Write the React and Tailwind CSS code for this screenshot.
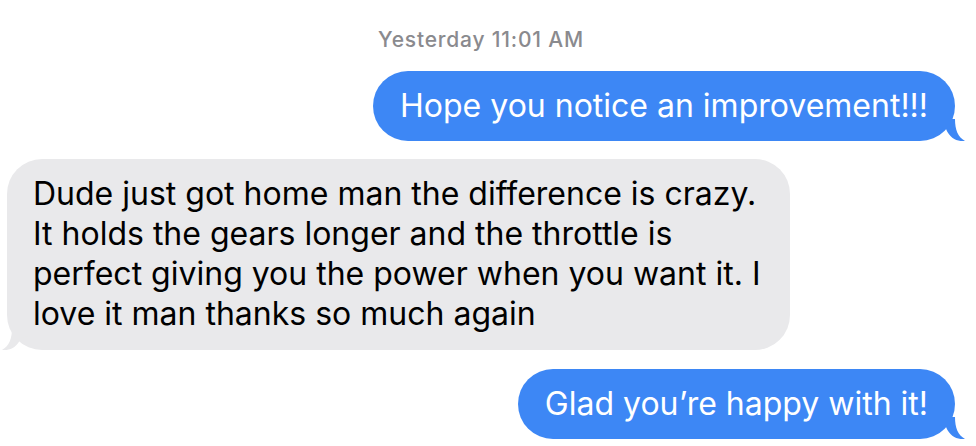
import React from "react";

const Tail = ({ side, color }) => (
  <svg
    className={`absolute bottom-0 ${side === "right" ? "-right-[10px]" : "-left-[5px] -scale-x-100"}`}
    width="26"
    height="22"
    viewBox="0 0 26 22"
  >
    <path d="M0 0 H16 C16 11 19 18 26 22 C19 22.8 11 20 7 10 L0 8 Z" fill={color} />
  </svg>
);

const Sent = ({ children }) => (
  <div className="flex justify-end pr-[21px]">
    <div className="relative rounded-[35px] bg-[#3d87f5] px-[27px] py-[15px] text-white whitespace-nowrap">
      {children}
      <Tail side="right" color="#3d87f5" />
    </div>
  </div>
);

const Received = ({ lines }) => (
  <div className="flex justify-start pl-[7px]">
    <div className="relative rounded-[35px] bg-[#e9e9eb] pl-[26px] pr-[30px] pt-[15px] pb-[16px] text-black whitespace-nowrap">
      {lines.map((l, i) => (
        <div key={i}>{l}</div>
      ))}
      <Tail side="left" color="#e9e9eb" />
    </div>
  </div>
);

export default function App() {
  return (
    <div className="w-[976px] h-[446px] overflow-hidden bg-white pt-[27px] font-['Inter',sans-serif] text-[32px] leading-[40px]">
      <div className="pr-[14px] text-center text-[21px] leading-[26px] font-medium tracking-[0.8px] text-[#8a8a8e]">
        Yesterday 11:01 AM
      </div>
      <div className="mt-[18px] flex flex-col">
        <Sent>Hope you notice an improvement!!!</Sent>
        <div className="mt-[18px]">
          <Received
            lines={[
              "Dude just got home man the difference is crazy.",
              "It holds the gears longer and the throttle is",
              "perfect giving you the power when you want it. I",
              "love it man thanks so much again",
            ]}
          />
        </div>
        <div className="mt-[19px]">
          <Sent>Glad you’re happy with it!</Sent>
        </div>
      </div>
    </div>
  );
}
